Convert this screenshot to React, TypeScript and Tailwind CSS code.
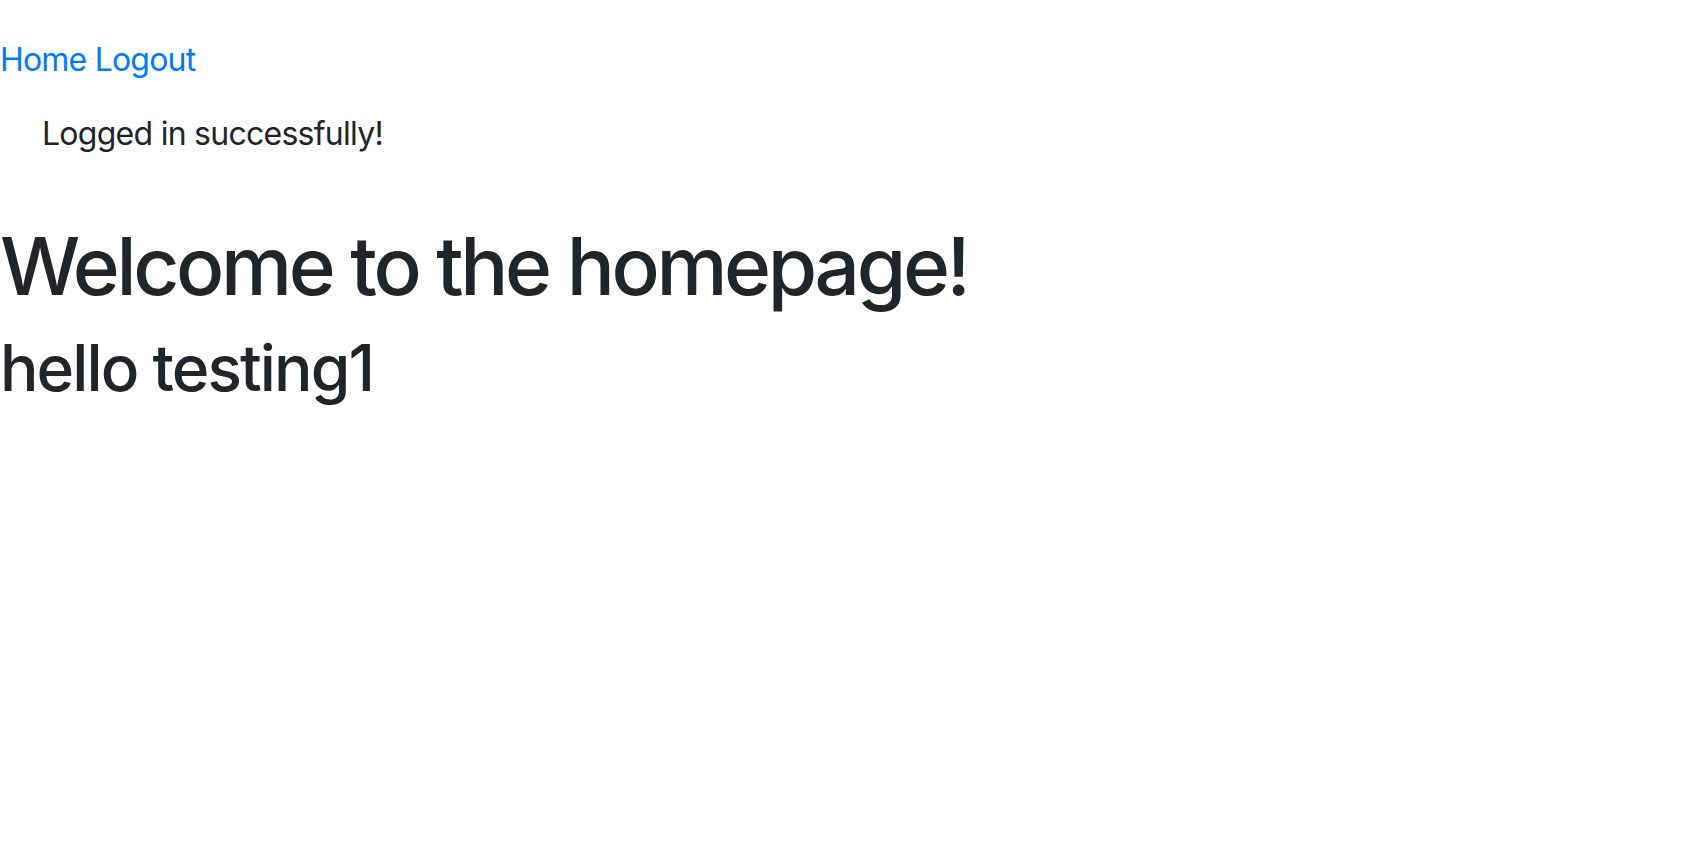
export default function App() {
  return (
    <div className="min-h-[856px] bg-white font-['Inter','Liberation_Sans',sans-serif] text-[#212529] text-[32px] leading-[1.5]">
      <nav className="pt-[36px] tracking-[-0.025em]">
        <a href="#" className="text-[#007bff]">
          Home
        </a>{' '}
        <a href="#" className="text-[#007bff]">
          Logout
        </a>
      </nav>
      <div className="mb-[34px] border-2 border-transparent px-[40px] py-[24px] tracking-[-0.023em]">
        Logged in successfully!
      </div>
      <h1 className="mb-[16px] text-[80px] font-medium leading-[1.2] tracking-[-0.042em]">
        Welcome to the homepage!
      </h1>
      <h2 className="mb-[16px] text-[64px] font-medium leading-[1.2] tracking-[-0.03em]">hello testing1</h2>
    </div>
  );
}
